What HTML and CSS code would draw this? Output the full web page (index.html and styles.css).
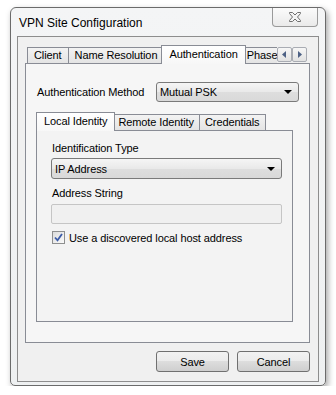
FILE: index.html
```html
<!DOCTYPE html>
<html>
<head>
<meta charset="utf-8">
<link rel="stylesheet" href="styles.css">
</head>
<body>
<div class="window">
  <div class="titlebar">
    <span class="title">VPN Site Configuration</span>
    <div class="close">
      <svg width="14" height="12" viewBox="0 0 14 12"><path d="M1.5 1.5h3l2.5 2.5 2.5-2.5h3v1l-3 3.5 3 3.5v1h-3l-2.5-2.5-2.5 2.5h-3v-1l3-3.5-3-3.5z" fill="#f4f4f4" stroke="#6f6f6f" stroke-width="1" stroke-linejoin="round"/></svg>
    </div>
  </div>
  <div class="client">
    <div class="tabs outer-tabs">
      <div class="tab first">Client</div>
      <div class="tab">Name Resolution</div>
      <div class="tab active">Authentication</div>
      <div class="tab clipped">Phase</div>
      <div class="scroller">
        <div class="sbtn"><svg width="5" height="7" viewBox="0 0 5 7"><path d="M4 0v7L0 3.5z" fill="#4d6185"/></svg></div>
        <div class="sbtn"><svg width="5" height="7" viewBox="0 0 5 7"><path d="M1 0v7l4-3.5z" fill="#4d6185"/></svg></div>
      </div>
    </div>
    <div class="panel outer-panel">
      <div class="method-row">
        <span class="label">Authentication Method</span>
        <div class="select method"><span>Mutual PSK</span><span class="arrow"></span></div>
      </div>
      <div class="inner">
        <div class="tabs inner-tabs">
          <div class="tab active first-active">Local Identity</div>
          <div class="tab">Remote Identity</div>
          <div class="tab">Credentials</div>
        </div>
        <div class="panel inner-panel">
          <div class="field-label">Identification Type</div>
          <div class="select wide"><span>IP Address</span><span class="arrow"></span></div>
          <div class="field-label second">Address String</div>
          <div class="textbox"></div>
          <div class="check">
            <span class="box"><svg width="9" height="9" viewBox="0 0 9 9"><path d="M1 4.5l2.5 2.8L8 1" fill="none" stroke="#3c5ca8" stroke-width="1.8"/></svg></span>
            <span>Use a discovered local host address</span>
          </div>
        </div>
      </div>
    </div>
    <div class="buttons">
      <div class="btn">Save</div>
      <div class="btn">Cancel</div>
    </div>
  </div>
</div>
</body>
</html>
```
FILE: styles.css
```css
* { box-sizing: border-box; }
body {
  margin: 0;
  background: #ffffff;
  font-family: "Liberation Sans", Arial, sans-serif;
  font-size: 11px;
  letter-spacing: -0.1px;
  color: #000;
}
.window {
  margin: 7px 0 0 10px;
  width: 316px;
  height: 379px;
  border: 1px solid #6b6b6b;
  border-radius: 6px 6px 5px 5px;
  background: linear-gradient(#f4f5f6, #eef0f1);
  box-shadow: 2px 3px 6px rgba(0, 0, 0, 0.35);
  padding: 0 6px 3px 6px;
  display: flex;
  flex-direction: column;
}
.titlebar {
  height: 28px;
  display: flex;
  align-items: flex-start;
}
.title {
  font-size: 12px;
  letter-spacing: 0;
  margin: 8px 0 0 2px;
  line-height: 14px;
}
.close {
  margin-left: auto;
  margin-right: 1px;
  width: 46px;
  height: 19px;
  border: 1px solid #9a9a9a;
  border-top: none;
  border-radius: 0 0 4px 4px;
  background: linear-gradient(#fbfbfb, #eaeaea);
  display: flex;
  align-items: center;
  justify-content: center;
}
.client {
  flex: 1;
  border: 1px solid #8d8d8d;
  background: #f0f0f0;
  padding: 8px 8px 0 7px;
  display: flex;
  flex-direction: column;
}
.tabs {
  display: flex;
  align-items: flex-end;
  height: 18px;
  position: relative;
  z-index: 1;
}
.outer-tabs { padding-left: 2px; }
.tab {
  height: 16px;
  border: 1px solid #898c95;
  border-bottom: none;
  background: linear-gradient(#f3f3f3, #e4e4e4);
  padding: 0 6px;
  line-height: 14px;
  white-space: nowrap;
  margin-left: -1px;
}
.tab.first { margin-left: 0; }
.tab.active {
  height: 19px;
  margin: 0 -2px -1px -3px;
  padding: 0 7px;
  background: linear-gradient(#ffffff, #f7f7f7);
  line-height: 17px;
  position: relative;
  z-index: 2;
}
.inner-tabs .tab { padding: 0 5px; }
.inner-tabs .tab.active { padding: 0 7px; }
.tab.first-active { margin-left: 0; }
.tab.clipped {
  width: 34px;
  overflow: hidden;
  border-right: none;
  padding-left: 3px;
  padding-right: 0;
}
.scroller {
  display: flex;
  margin-bottom: 1px;
}
.sbtn {
  width: 15px;
  height: 15px;
  border: 1px solid #a9acb3;
  border-radius: 2px;
  background: linear-gradient(#f6f6f6, #e2e2e2);
  display: flex;
  align-items: center;
  justify-content: center;
}
.panel {
  border: 1px solid #898c95;
  background: #f6f6f6;
}
.outer-panel {
  flex: 1;
  padding: 18px 10px 0 11px;
  display: flex;
  flex-direction: column;
}
.method-row {
  display: flex;
  align-items: center;
  height: 20px;
}
.label { flex: 1; }
.select {
  height: 20px;
  border: 1px solid #7a7a7a;
  border-radius: 3px;
  background: linear-gradient(#f5f5f5, #e9e9e9 50%, #dedede 50%, #d9d9d9);
  display: flex;
  align-items: center;
  padding: 0 6px 0 3px;
}
.select span:first-child { flex: 1; }
.method { width: 143px; }
.arrow {
  width: 0;
  height: 0;
  border-left: 4px solid transparent;
  border-right: 4px solid transparent;
  border-top: 4px solid #000;
}
.inner {
  width: 257px;
  margin-left: -1px;
  margin-top: 10px;
}
.inner-panel {
  height: 192px;
  padding: 11px 10px 0 14px;
  background: #f3f3f3;
}
.field-label {
  line-height: 13px;
  padding-left: 1px;
  margin-bottom: 3px;
}
.field-label.second { margin-top: 8px; margin-bottom: 4px; }
.wide { width: 231px; height: 21px; }
.textbox {
  width: 231px;
  height: 20px;
  border: 1px solid #c5c5c5;
  border-radius: 2px;
  background: #f0f0f0;
}
.check {
  display: flex;
  align-items: center;
  margin-top: 7px;
  padding-left: 1px;
  gap: 4px;
}
.box {
  width: 13px;
  height: 13px;
  border: 1px solid #8e8f8f;
  background: linear-gradient(135deg, #dcdcdc, #fafafa);
  display: flex;
  align-items: center;
  justify-content: center;
}
.buttons {
  display: flex;
  justify-content: flex-end;
  gap: 8px;
  margin: 8px 0 0 0;
  height: 30px;
}
.btn {
  width: 73px;
  height: 21px;
  border: 1px solid #707070;
  border-radius: 3px;
  background: linear-gradient(#f2f2f2, #ebebeb 50%, #dddddd 50%, #cfcfcf);
  display: flex;
  align-items: center;
  justify-content: center;
}
```
